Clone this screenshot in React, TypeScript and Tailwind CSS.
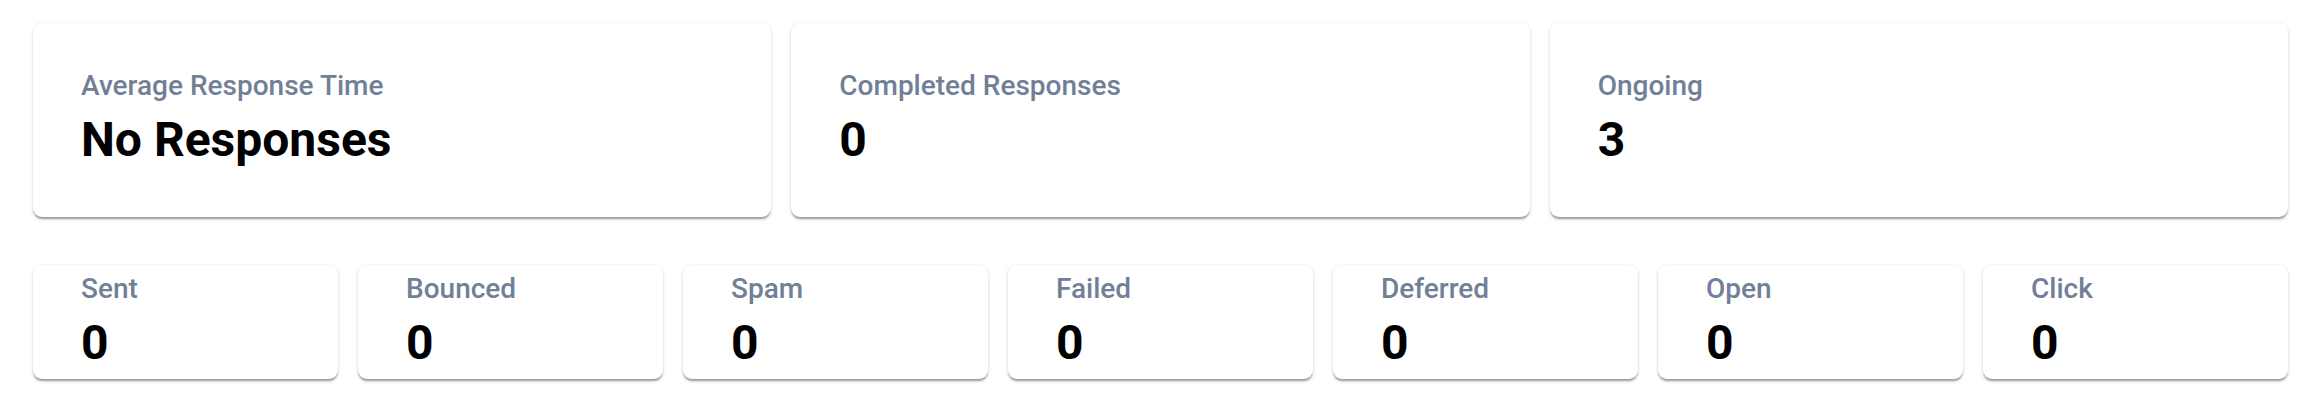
import React from "react";

const top = [
  { label: "Average Response Time", value: "No Responses" },
  { label: "Completed Responses", value: "0" },
  { label: "Ongoing", value: "3" },
];

const bottom = [
  { label: "Sent", value: "0" },
  { label: "Bounced", value: "0" },
  { label: "Spam", value: "0" },
  { label: "Failed", value: "0" },
  { label: "Deferred", value: "0" },
  { label: "Open", value: "0" },
  { label: "Click", value: "0" },
];

function Label({ children }: { children: React.ReactNode }) {
  return <div className="text-[28px] leading-[40px] font-medium text-[#718096]">{children}</div>;
}

function Value({ children }: { children: React.ReactNode }) {
  return <div className="text-[48px] leading-[68px] font-bold text-black">{children}</div>;
}

const cardCls =
  "bg-white rounded-[9px] px-[48px] shadow-[0_3px_2px_-1.5px_rgba(0,0,0,0.2),0_1.5px_1.5px_0_rgba(0,0,0,0.14),0_1.5px_4.5px_0_rgba(0,0,0,0.12)]";

export default function App() {
  return (
    <div
      className="w-[2324px] h-[400px] bg-white pl-[33px] pr-[36px] pt-[23px]"
      style={{ fontFamily: "Roboto, 'Noto Sans', sans-serif" }}
    >
      <div className="grid grid-cols-3 gap-[20px]">
        {top.map((c) => (
          <div key={c.label} className={`${cardCls} h-[194px] pt-[43px]`}>
            <Label>{c.label}</Label>
            <Value>{c.value}</Value>
          </div>
        ))}
      </div>
      <div className="grid grid-cols-7 gap-[20px] mt-[48px]">
        {bottom.map((c) => (
          <div key={c.label} className={`${cardCls} h-[114px] pt-[4px]`}>
            <Label>{c.label}</Label>
            <Value>{c.value}</Value>
          </div>
        ))}
      </div>
    </div>
  );
}
